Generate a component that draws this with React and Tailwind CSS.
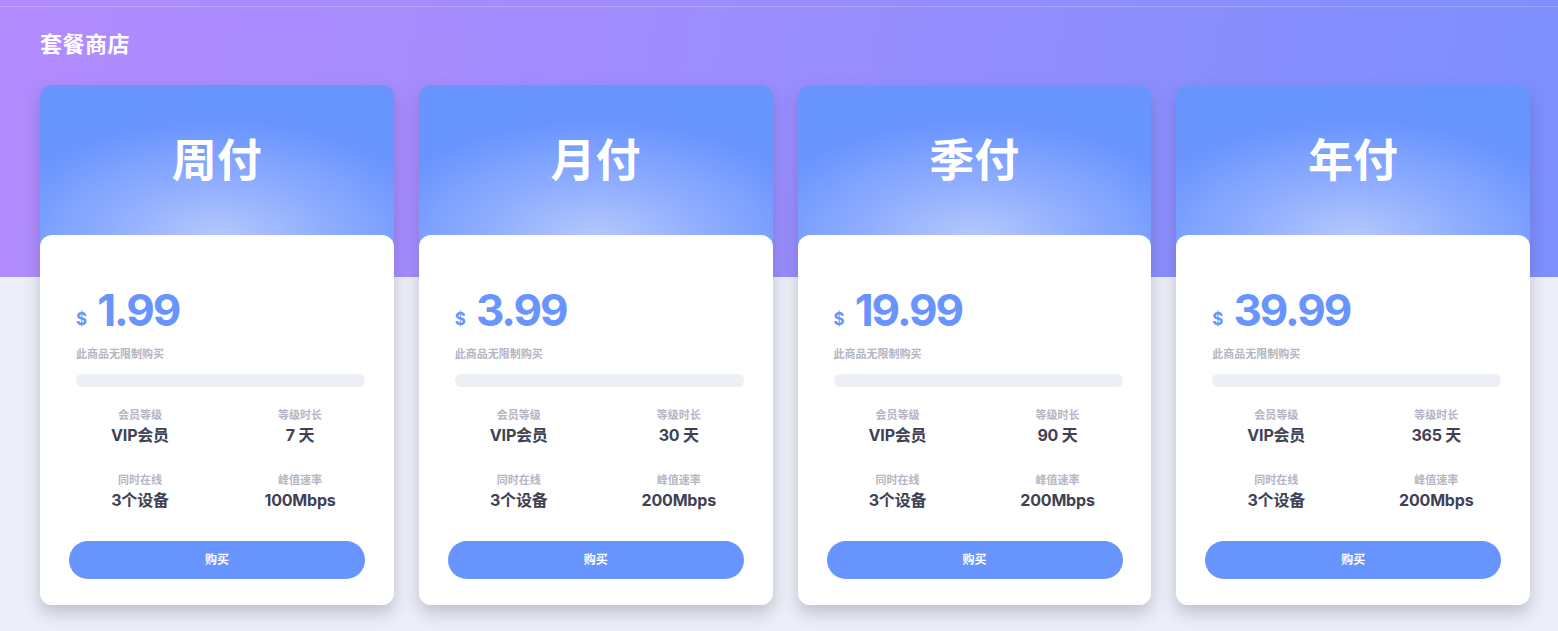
const plans = [
  { name: '周付', price: '1.99', days: '7 天', speed: '100Mbps' },
  { name: '月付', price: '3.99', days: '30 天', speed: '200Mbps' },
  { name: '季付', price: '19.99', days: '90 天', speed: '200Mbps' },
  { name: '年付', price: '39.99', days: '365 天', speed: '200Mbps' },
]

const font = "font-['Inter','Noto_Sans_CJK_SC',sans-serif]"

function Stat({ label, value }) {
  return (
    <div className="flex flex-col items-center">
      <span className="text-[11px] font-semibold text-[#b5b5c3] leading-[16px]">{label}</span>
      <span className="text-[16px] font-bold text-[#3f4254] leading-[24px] tracking-[-0.2px]">{value}</span>
    </div>
  )
}

function PlanCard({ plan }) {
  return (
    <div className="rounded-xl bg-no-repeat bg-[length:100%_170px] bg-[radial-gradient(ellipse_230px_120px_at_50%_155px,#b6c9fd_0%,#92affe_45%,#6894fe_100%)] shadow-[0_8px_16px_rgba(60,60,90,0.25)]">
      <div className="h-[150px] flex items-center justify-center">
        <span className="text-[45px] font-bold text-white mt-[2px]">{plan.name}</span>
      </div>
      <div className="bg-white rounded-xl pt-[50px] pb-[26px]">
        <div className="px-[36px]">
          <div className="flex items-end gap-[10px] h-[44px]">
            <span className="text-[17px] font-bold text-[#6894fe] leading-none mb-[1px]">$</span>
            <span className="text-[44px] font-bold text-[#6894fe] leading-none tracking-[-2px] translate-y-[3px]">{plan.price}</span>
          </div>
          <div className="mt-[18px] text-[11px] font-semibold text-[#b5b5c3] leading-[14px]">此商品无限制购买</div>
          <div className="mt-[13px] h-[13px] w-[289px] rounded-md bg-[#eceff3]" />
        </div>
        <div className="ml-[20px] w-[320px] grid grid-cols-2 gap-y-[25px] mt-[20px]">
          <Stat label="会员等级" value="VIP会员" />
          <Stat label="等级时长" value={plan.days} />
          <Stat label="同时在线" value="3个设备" />
          <Stat label="峰值速率" value={plan.speed} />
        </div>
        <div className="px-[29px] mt-[29px]">
          <button className="w-[296px] h-[38px] rounded-full bg-[#6894fe] text-white text-[12px] font-bold">购买</button>
        </div>
      </div>
    </div>
  )
}

export default function App() {
  return (
    <div className={`${font} w-[1558px] h-[631px] overflow-hidden bg-[#eceff7] bg-no-repeat bg-[length:100%_277px] bg-[linear-gradient(100deg,#b28bfd_0%,#9d8dfd_45%,#7c8ffd_100%)]`}>
      <div className="h-[7px] border-b border-white/20" />
      <div className="pl-[40px] pr-[28px]">
        <h1 className="mt-[22px] text-[22px] font-bold text-white leading-[30px] tracking-[0.5px]">套餐商店</h1>
        <div className="mt-[26px] grid grid-cols-4 gap-[25px]">
          {plans.map((p) => (
            <PlanCard key={p.name} plan={p} />
          ))}
        </div>
      </div>
    </div>
  )
}
